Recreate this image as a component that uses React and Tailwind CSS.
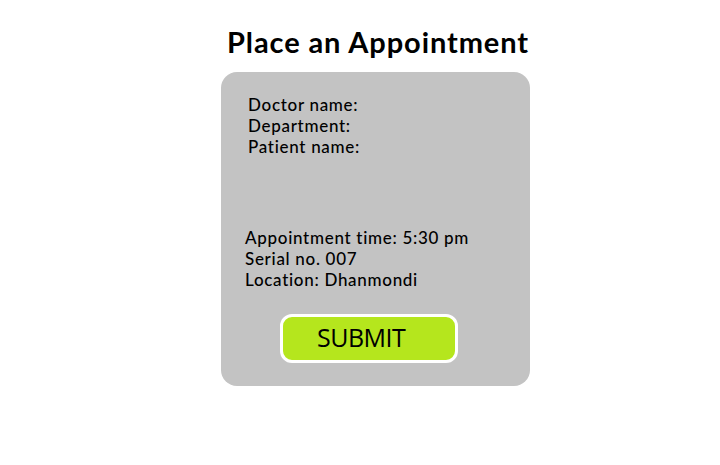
export default function App() {
  return (
    <div className="w-[720px] h-[465px] bg-white">
      <div className="ml-[221px] w-[309px] pt-[24px] flex flex-col">
        <h1 className="text-center text-[29px] leading-[36px] font-bold tracking-[0.9px] text-black pl-[5px] whitespace-nowrap font-['Lato',sans-serif]">
          Place an Appointment
        </h1>
        <div className="mt-[12px] h-[314px] rounded-[16px] bg-[#c3c3c3] flex flex-col font-['Lato',sans-serif] text-[17px] leading-[21px] font-medium tracking-[0.7px] text-black">
          <div className="pt-[22px] pl-[27px] flex flex-col">
            <span>Doctor name:</span>
            <span>Department:</span>
            <span>Patient name:</span>
          </div>
          <div className="mt-[70px] pl-[24px] flex flex-col">
            <span>Appointment time: 5:30 pm</span>
            <span>Serial no. 007</span>
            <span>Location: Dhanmondi</span>
          </div>
          <div className="mt-[24px] pl-[59px]">
            <button className="w-[178px] h-[49px] rounded-[12px] border-[3px] border-white bg-[#b5e61d] text-left pl-[34px] pb-[2px] text-[25px] leading-none font-normal tracking-[-0.5px] text-black font-['Open_Sans',sans-serif]">
              SUBMIT
            </button>
          </div>
        </div>
      </div>
    </div>
  );
}
